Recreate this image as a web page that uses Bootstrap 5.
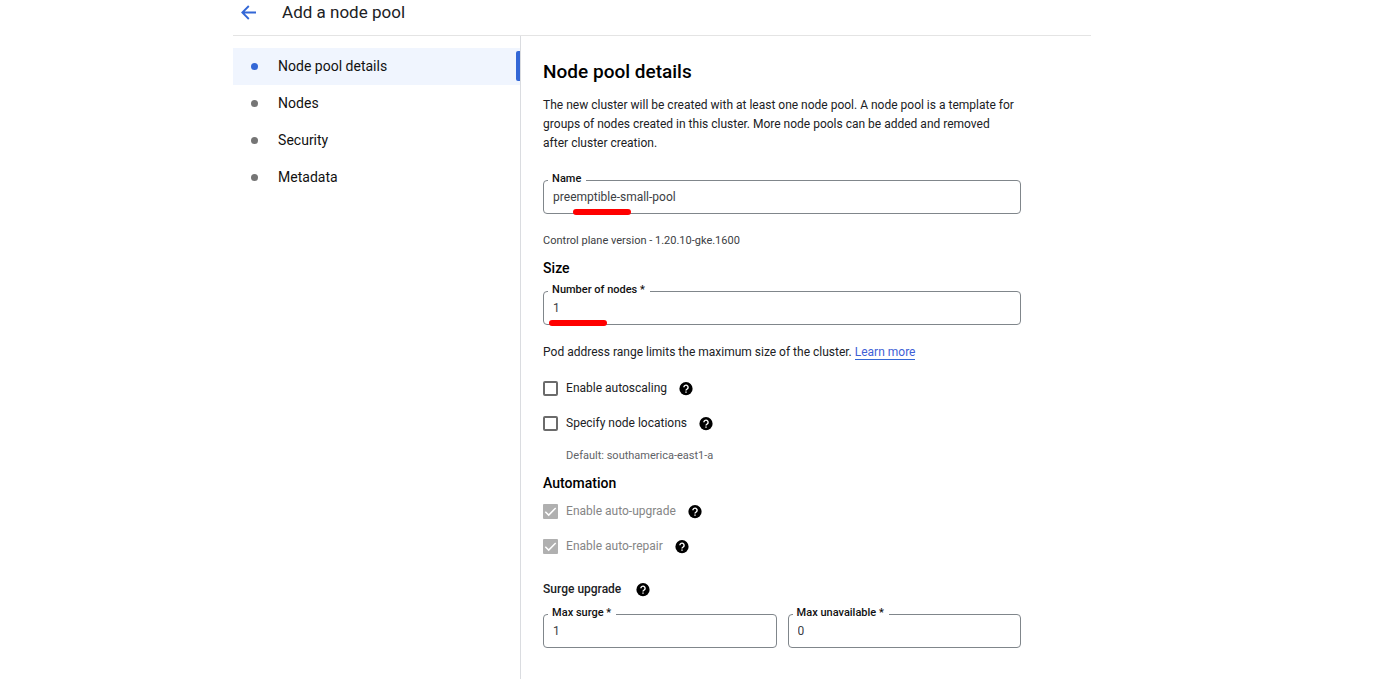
<!DOCTYPE html>
<html lang="en">
<head>
<meta charset="utf-8">
<meta name="viewport" content="width=device-width, initial-scale=1">
<title>Add a node pool</title>
<link href="https://cdn.jsdelivr.net/npm/bootstrap@5.3.0/dist/css/bootstrap.min.css" rel="stylesheet">
<style>
  body { font-family: Roboto, "Liberation Sans", sans-serif; font-size: 12px; line-height: 19px; color: #202124; background: #fff; }
  .console { width: 100%; max-width: 858px; margin-left: 16.65%; }
  .console-bar { height: 36px; border-bottom: 1px solid #e4e4e4; padding: 0 8px 11px; gap: 26px; }
  .console-bar h1 { font-size: 17px; line-height: 24px; font-weight: 400; margin: 0; }
  .back-btn { line-height: 0; }
  .steps { width: 288px; padding-top: 12px; border-right: 1px solid #dadce0; }
  .steps .nav-link { display: flex; align-items: center; gap: 20px; height: 37px; padding: 0 18px; color: #111; font-size: 14px; position: relative; }
  .steps .nav-link::before { content: ""; width: 7px; height: 7px; border-radius: 50%; background: #757575; }
  .steps .nav-link.active { background: #f0f5fe; }
  .steps .nav-link.active::before { background: #3367d6; }
  .steps .nav-link.active::after { content: ""; position: absolute; right: 0; top: 3px; bottom: 4px; width: 4px; border-radius: 2px 0 0 2px; background: #3367d6; }
  .details { max-width: 500px; padding: 24px 0 32px 22px; }
  .details h2 { font-size: 19px; line-height: 24px; font-weight: 500; margin: 0 0 12px; color: #000; }
  .details h3 { font-size: 14px; line-height: 19px; font-weight: 500; margin: 9px 0; color: #000; }
  .details p { margin: 0; }
  .details .intro { padding-right: 4px; margin-bottom: 27px; }
  .outlined { position: relative; }
  .outlined label { position: absolute; left: 5px; top: -9px; padding: 0 5px 0 4px; background: #fff; font-size: 11px; line-height: 16px; font-weight: 500; color: #111; }
  .outlined .form-control { height: 34px; border: 1px solid #80868b; border-radius: 4px; padding: 0 8px 1px 9px; font-size: 12px; color: #3c4043; }
  .marker { position: absolute; bottom: -1px; width: 58px; height: 6px; border-radius: 3px; background: #f00; }
  .marker-name { left: 30px; }
  .marker-count { left: 6px; }
  .hint { font-size: 11px; color: #5f6368; }
  .details .version { color: #3c4043; margin-top: 17px; }
  .nodes-field { margin-top: 13px; }
  .details .range-note { margin: 18px 0 17px; }
  .more { color: #3f5fd6; text-decoration: none; border-bottom: 1px solid #3367d6; }
  .option { display: flex; align-items: center; height: 19px; margin-bottom: 16px; }
  .option .form-check-input { width: 15px; height: 15px; margin: 0 8px 0 0; border: 2px solid #6b6b6b; border-radius: 2px; }
  .option .form-check-input:disabled { opacity: 1; background-color: #b0b0b0; border: 0; border-radius: 1px;
    background-image: url("data:image/svg+xml,%3Csvg xmlns='http://www.w3.org/2000/svg' viewBox='0 0 15 15'%3E%3Cpath fill='none' stroke='%23fff' stroke-width='1.5' d='M2.3 7.7l3.4 3.4L12.7 4'/%3E%3C/svg%3E"); }
  .option .form-check-input:disabled ~ label { opacity: 1; color: #858585; }
  .details .option-note { margin: -3px 0 0 23px; }
  .help-btn { line-height: 0; margin-left: 12px; }
  .surge { gap: 3px; margin: 24px 0 15px; font-weight: 500; }
  .surge-fields { gap: 11px; }
</style>
</head>
<body>
<svg class="d-none" xmlns="http://www.w3.org/2000/svg">
  <symbol id="help" viewBox="0 0 14 14">
    <circle cx="7" cy="6.7" r="6.6" fill="#000"/>
    <path d="M4.9 5.3a2.1 2.1 0 1 1 3.4 1.6C7.4 7.5 7 7.7 7 8.6" fill="none" stroke="#fff" stroke-width="1.4"/>
    <path d="M6.3 9.4h1.4v1.4H6.3z" fill="#fff"/>
  </symbol>
</svg>

<div class="console d-flex flex-column min-vh-100">
  <header class="console-bar d-flex align-items-center">
    <button type="button" class="back-btn btn p-0 border-0" aria-label="Back">
      <svg width="15" height="15" viewBox="0 0 15 15" fill="none" stroke="#3367d6" stroke-width="1.8"><path d="M15 7.5H1.5M7.8 1L1.3 7.5l6.5 6.5"/></svg>
    </button>
    <h1>Add a node pool</h1>
  </header>

  <div class="d-flex flex-grow-1">
    <nav class="steps nav flex-column flex-nowrap flex-shrink-0" aria-label="Steps">
      <a class="nav-link active" href="#details" aria-current="page">Node pool details</a>
      <a class="nav-link" href="#nodes">Nodes</a>
      <a class="nav-link" href="#security">Security</a>
      <a class="nav-link" href="#metadata">Metadata</a>
    </nav>

    <main class="details flex-grow-1" id="details">
      <h2>Node pool details</h2>
      <p class="intro">The new cluster will be created with at least one node pool. A node pool is a template for groups of nodes created in this cluster. More node pools can be added and removed after cluster creation.</p>

      <div class="outlined">
        <input class="form-control" id="name" type="text" value="preemptible-small-pool">
        <label for="name">Name</label>
        <span class="marker marker-name"></span>
      </div>
      <p class="hint version">Control plane version - 1.20.10-gke.1600</p>

      <h3>Size</h3>
      <div class="outlined nodes-field">
        <input class="form-control" id="count" type="text" inputmode="numeric" value="1">
        <label for="count">Number of nodes *</label>
        <span class="marker marker-count"></span>
      </div>
      <p class="range-note">Pod address range limits the maximum size of the cluster. <a class="more" href="#more">Learn more</a></p>

      <div class="option">
        <input class="form-check-input" type="checkbox" id="autoscale">
        <label for="autoscale">Enable autoscaling</label>
        <button type="button" class="help-btn btn p-0 border-0" aria-label="Help"><svg width="14" height="14"><use href="#help"/></svg></button>
      </div>
      <div class="option">
        <input class="form-check-input" type="checkbox" id="locations">
        <label for="locations">Specify node locations</label>
        <button type="button" class="help-btn btn p-0 border-0" aria-label="Help"><svg width="14" height="14"><use href="#help"/></svg></button>
      </div>
      <p class="hint option-note">Default: southamerica-east1-a</p>

      <h3>Automation</h3>
      <div class="option">
        <input class="form-check-input" type="checkbox" id="upgrade" checked disabled>
        <label for="upgrade">Enable auto-upgrade</label>
        <button type="button" class="help-btn btn p-0 border-0" aria-label="Help"><svg width="14" height="14"><use href="#help"/></svg></button>
      </div>
      <div class="option">
        <input class="form-check-input" type="checkbox" id="repair" checked disabled>
        <label for="repair">Enable auto-repair</label>
        <button type="button" class="help-btn btn p-0 border-0" aria-label="Help"><svg width="14" height="14"><use href="#help"/></svg></button>
      </div>

      <div class="surge d-flex align-items-center">
        <span>Surge upgrade</span>
        <button type="button" class="help-btn btn p-0 border-0" aria-label="Help"><svg width="14" height="14"><use href="#help"/></svg></button>
      </div>
      <div class="surge-fields d-flex">
        <div class="outlined flex-fill">
          <input class="form-control" id="surge" type="text" inputmode="numeric" value="1">
          <label for="surge">Max surge *</label>
        </div>
        <div class="outlined flex-fill">
          <input class="form-control" id="unavailable" type="text" inputmode="numeric" value="0">
          <label for="unavailable">Max unavailable *</label>
        </div>
      </div>
    </main>
  </div>
</div>
<script src="https://cdn.jsdelivr.net/npm/bootstrap@5.3.0/dist/js/bootstrap.bundle.min.js"></script>
</body>
</html>
